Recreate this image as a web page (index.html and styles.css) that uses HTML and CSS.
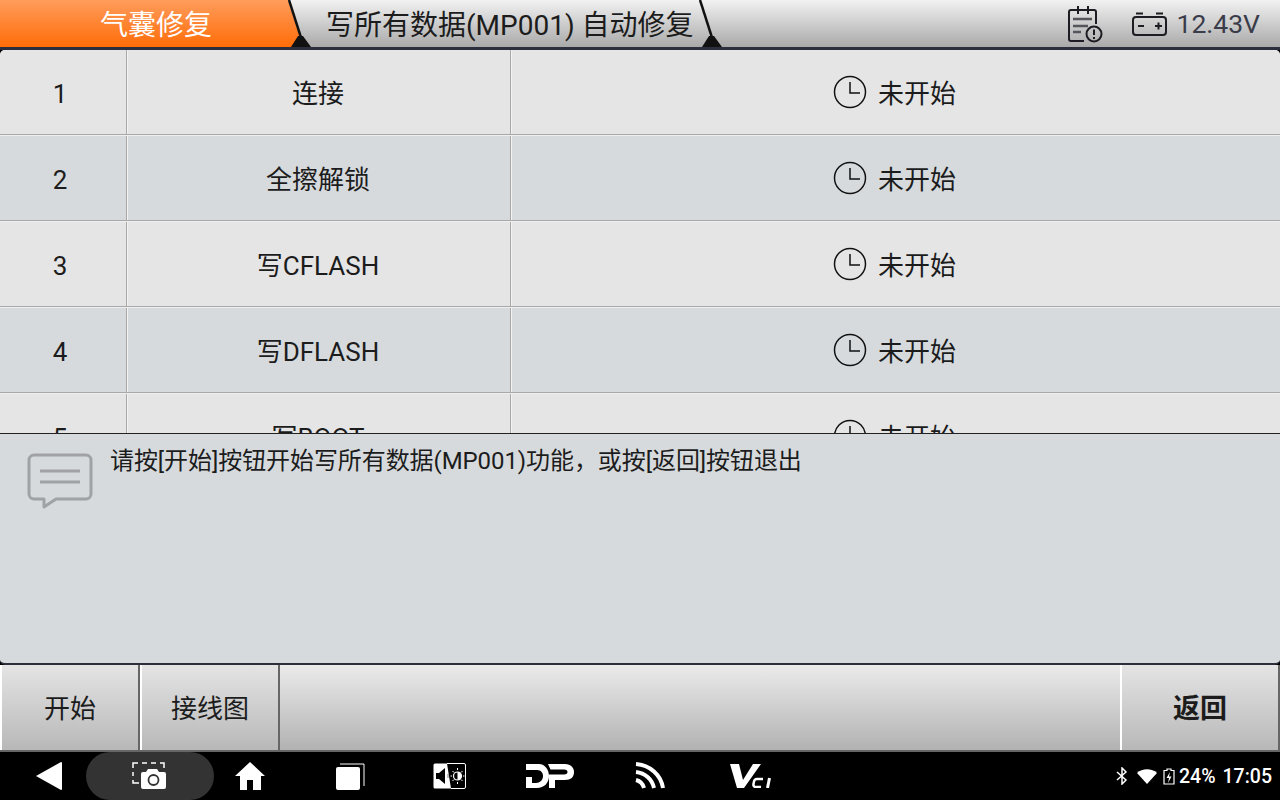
FILE: index.html
```html
<!DOCTYPE html>
<html lang="zh-CN">
  <head>
    <meta charset="UTF-8" />
    <title>气囊修复</title>
    <link rel="stylesheet" href="styles.css">
  </head>
  <body>
    <div class="topBar">
      <div class="tab activeTab">气囊修复</div>
      <div class="tab pathTab">写所有数据(MP001) 自动修复</div>
      <svg class="tabEdge edgeOne" width="26" height="47" viewBox="0 0 26 47">
        <path d="M1 0 L16 47" stroke="#111" stroke-width="2.500" fill="none" />
        <path d="M10 36 L15 36 L23 47 L3 47 Z" fill="#111" />
      </svg>
      <svg class="tabEdge edgeTwo" width="26" height="47" viewBox="0 0 26 47">
        <path d="M1 0 L16 47" stroke="#111" stroke-width="2.500" fill="none" />
        <path d="M10 36 L15 36 L23 47 L3 47 Z" fill="#111" />
      </svg>
      <div class="topStatus">
        <svg class="reportIcon" width="36" height="38" viewBox="0 0 36 38" fill="none" stroke="#1c1c22" stroke-width="2">
          <path d="M16 35 H3 a2 2 0 0 1 -2 -2 V6 a2 2 0 0 1 2 -2 H26 a2 2 0 0 1 2 2 V18" />
          <path d="M10 0 V8 M20 0 V8" />
          <path d="M5 13 H24 M5 20 H20 M5 26 H13" stroke="#55555c" stroke-width="2.500" />
          <circle cx="26" cy="28" r="7.500" />
          <path d="M26 23.500 V29 M26 31 V33" />
        </svg>
        <svg class="batteryIcon" width="36" height="24" viewBox="0 0 36 24" fill="none" stroke="#1c1c22" stroke-width="2">
          <rect x="1" y="5" width="33" height="18" rx="3" />
          <path d="M4 1.500 H11 M24 1.500 H31" />
          <path d="M6 14 H12 M23 14 H30 M26.500 10.500 V17.500" />
        </svg>
        <span class="voltage">12.43V</span>
      </div>
    </div>

    <div class="tableArea">
      <div class="row">
        <div class="cell numCell"><span class="rowNum">1</span></div>
        <div class="cell nameCell">连接</div>
        <div class="cell stateCell">
          <svg class="clock" width="34" height="34" viewBox="0 0 34 34" fill="none" stroke="#111" stroke-width="1.500"><circle cx="17" cy="17" r="15.500" /><path d="M17 7 V18 H27" /></svg>
          <span>未开始</span>
        </div>
      </div>
      <div class="row altRow">
        <div class="cell numCell"><span class="rowNum">2</span></div>
        <div class="cell nameCell">全擦解锁</div>
        <div class="cell stateCell">
          <svg class="clock" width="34" height="34" viewBox="0 0 34 34" fill="none" stroke="#111" stroke-width="1.500"><circle cx="17" cy="17" r="15.500" /><path d="M17 7 V18 H27" /></svg>
          <span>未开始</span>
        </div>
      </div>
      <div class="row">
        <div class="cell numCell"><span class="rowNum">3</span></div>
        <div class="cell nameCell">写CFLASH</div>
        <div class="cell stateCell">
          <svg class="clock" width="34" height="34" viewBox="0 0 34 34" fill="none" stroke="#111" stroke-width="1.500"><circle cx="17" cy="17" r="15.500" /><path d="M17 7 V18 H27" /></svg>
          <span>未开始</span>
        </div>
      </div>
      <div class="row altRow">
        <div class="cell numCell"><span class="rowNum">4</span></div>
        <div class="cell nameCell">写DFLASH</div>
        <div class="cell stateCell">
          <svg class="clock" width="34" height="34" viewBox="0 0 34 34" fill="none" stroke="#111" stroke-width="1.500"><circle cx="17" cy="17" r="15.500" /><path d="M17 7 V18 H27" /></svg>
          <span>未开始</span>
        </div>
      </div>
      <div class="row">
        <div class="cell numCell"><span class="rowNum">5</span></div>
        <div class="cell nameCell">写BOOT</div>
        <div class="cell stateCell">
          <svg class="clock" width="34" height="34" viewBox="0 0 34 34" fill="none" stroke="#111" stroke-width="1.500"><circle cx="17" cy="17" r="15.500" /><path d="M17 7 V18 H27" /></svg>
          <span>未开始</span>
        </div>
      </div>
    </div>

    <div class="messageArea">
      <svg class="messageIcon" width="68" height="58" viewBox="0 0 68 58" fill="none" stroke="#a0a2a5" stroke-width="3">
        <path d="M8 3 H60 a5 5 0 0 1 5 5 V42 a5 5 0 0 1 -5 5 H30 L18 55 V47 H8 a5 5 0 0 1 -5 -5 V8 a5 5 0 0 1 5 -5 Z" stroke-linejoin="round" />
        <path d="M14 19 H54 M14 30 H54" />
      </svg>
      <p class="messageText">请按[开始]按钮开始写所有数据(MP001)功能，或按[返回]按钮退出</p>
    </div>

    <div class="buttonBar">
      <button class="barButton">开始</button>
      <button class="barButton">接线图</button>
      <div class="barFill"></div>
      <button class="barButton backButton">返回</button>
    </div>

    <div class="navBar">
      <div class="navLeft">
        <svg class="navBack" width="28" height="30" viewBox="0 0 28 30"><path d="M26 1 a1 1 0 0 1 1 1 V28 a1 1 0 0 1 -1 1 L1 15 Z" fill="#fff" /></svg>
        <div class="shotPill">
          <svg width="36" height="28" viewBox="0 0 36 28" fill="none">
            <path d="M1 6 V1 H6 M10 1 H15 M19 1 H24 M28 1 H32 V6 M1 10 V14 M1 18 V21 H7" stroke="#fff" stroke-width="1.500" />
            <path d="M9 12 a2 2 0 0 1 2 -2 H14 L16 7 H25 L27 10 H32 a2 2 0 0 1 2 2 V25 a2 2 0 0 1 -2 2 H11 a2 2 0 0 1 -2 -2 Z" fill="#fff" />
            <circle cx="21.500" cy="18" r="5" fill="#fff" stroke="#333" stroke-width="1.800" />
          </svg>
        </div>
        <svg class="navHome" width="30" height="30" viewBox="0 0 30 30"><path d="M15 1 L30 15 H26 V29 H18 V19 H12 V29 H5 V15 H0 Z" fill="#fff" /></svg>
        <svg class="navRecent" width="30" height="28" viewBox="0 0 30 28" fill="none">
          <rect x="1" y="5" width="24" height="23" rx="2" fill="#fff" />
          <path d="M5 2 H29 V24" stroke="#fff" stroke-width="1" />
        </svg>
        <svg class="navSound" width="33" height="26" viewBox="0 0 33 26" fill="none">
          <path d="M2 0.500 H14 L18 25.500 H2 a1.500 1.500 0 0 1 -1.500 -1.500 V2 a1.500 1.500 0 0 1 1.500 -1.500 Z" fill="#fff" />
          <path d="M14 0.500 H31 a1.500 1.500 0 0 1 1.500 1.500 V24 a1.500 1.500 0 0 1 -1.500 1.500 H18" stroke="#fff" stroke-width="1" />
          <path d="M3 10 H6 L12 5 V21 L6 16 H3 Z" fill="#000" />
          <path d="M15 11 V15" stroke="#777" stroke-width="1" />
          <circle cx="24.500" cy="13" r="4" stroke="#fff" stroke-width="1.200" />
          <path d="M24.500 13 m0 -4 a4 4 0 0 1 0 8 Z" fill="#fff" />
          <path d="M24.500 5 V7 M24.500 19 V21 M17.500 13 H19 M30 13 H31.500 M19.500 8 L21 9.500 M28 16.500 L29.500 18 M29.500 8 L28 9.500 M21 16.500 L19.500 18" stroke="#fff" stroke-width="1" />
        </svg>
        <svg class="navDp" width="48" height="24" viewBox="0 0 48 24">
          <path d="M0 0 H13 C19 0 23 6 23 12 C23 19 18 24 11 24 H0 V13 H6 V19 H10 C14 19 17 16 17 12 C17 9 15 6 11 6 H0 Z" fill="#fff" />
          <path d="M22 0 H39 C45 0 48 4 48 8 C48 13 45 16 39 16 H29 V24 H23 V10.500 H38 C40.500 10.500 41.500 9.500 41.500 8 C41.500 6.500 40.500 5.500 38 5.500 H24.500 Z" fill="#fff" />
        </svg>
        <svg class="navFeed" width="30" height="28" viewBox="0 0 30 28" fill="none" stroke="#fff" stroke-width="4">
          <path d="M1 2 C15 3 26 13 28 26" />
          <path d="M1 10 C10 11 17 17 19 26" />
          <path d="M1 18 C5 19 8 22 9 26" />
        </svg>
        <svg class="navVci" width="42" height="24" viewBox="0 0 42 24">
          <path d="M0 0 H9 L13 16 L23 0 H31 L14 24 H7 Z" fill="#fff" />
          <path d="M33 15 H27 Q24.500 15 24 17.500 L23.500 20 Q23 23 26 23 H31" stroke="#fff" stroke-width="2.500" fill="none" />
          <path d="M39.500 14 L37.500 24" stroke="#fff" stroke-width="3" />
        </svg>
      </div>
      <div class="navRight">
        <svg width="12" height="18" viewBox="0 0 12 18" fill="none" stroke="#fff" stroke-width="1.500"><path d="M1 5 L10 13 L6 17 V1 L10 5 L1 13" /></svg>
        <svg class="statusWifi" width="20" height="15" viewBox="0 0 20 15"><path d="M0 4 C5 -1 15 -1 20 4 L10 15 Z" fill="#fff" /></svg>
        <svg class="statusBattery" width="12" height="17" viewBox="0 0 12 17" fill="none"><path d="M4 1 H8 V2.500 H11 V16 H1 V2.500 H4 Z" stroke="#fff" stroke-width="1.200" /><path d="M7 4 L3.500 10 H6 L5 15 L8.500 8.500 H6 Z" fill="#fff" /></svg>
        <span class="statusText">24%</span>
        <span class="statusText statusTime">17:05</span>
      </div>
    </div>
  </body>
</html>
```

FILE: styles.css
```css
* {
  box-sizing: border-box;
}

html,
body {
  height: 800px;
  overflow: hidden;
}

body {
  margin: 0;
  display: flex;
  flex-direction: column;
  background-color: #000;
  color: #1c1c1c;
  font-family: Roboto, 'Noto Sans CJK SC', sans-serif;
}

.topBar {
  height: 50px;
  display: flex;
  flex-shrink: 0;
  position: relative;
  background: linear-gradient(#f2f2f2, #a9a9a9 47px);
  border-bottom: 3px solid #2c2e3c;
}

.tab {
  display: flex;
  align-items: center;
  height: 45px;
  font-size: 28px;
  white-space: nowrap;
}

.activeTab {
  width: 310px;
  height: 47px;
  padding: 0 0 2px 100px;
  color: #fff;
  background: linear-gradient(#ff9c5c, #ff6d08);
  clip-path: polygon(0 0, 288px 0, 303px 47px, 0 47px);
}

.pathTab {
  margin-left: 16px;
}

.tabEdge {
  position: absolute;
  top: 0;
}

.edgeOne {
  left: 288px;
}

.edgeTwo {
  left: 699px;
}

.topStatus {
  margin-left: auto;
  display: flex;
  align-items: center;
  padding-right: 20px;
}

.reportIcon {
  margin-right: 28px;
  margin-top: 3px;
}

.batteryIcon {
  margin-right: 9px;
}

.voltage {
  font-size: 26.500px;
  color: #3a3c4a;
}

.tableArea {
  height: 384px;
  flex-shrink: 0;
  overflow: hidden;
  background-color: #e5e5e5;
  border-radius: 5px 5px 0 0;
  border-bottom: 1px solid #222;
}

.row {
  display: flex;
  height: 86px;
  background-color: #e5e5e5;
  border-top: 1px solid #efefef;
  border-bottom: 1px solid #a8a8a8;
  font-size: 26px;
}

.row:first-child {
  height: 85px;
  border-top: none;
}

.altRow {
  background-color: #d7dadd;
}

.cell {
  display: flex;
  align-items: center;
  justify-content: center;
  padding-bottom: 2px;
}

.numCell {
  width: 127px;
  padding-right: 6px;
  border-right: 1px solid #a8a8a8;
}

.rowNum {
  position: relative;
  top: 3px;
}

.nameCell {
  width: 384px;
  padding-right: 2px;
  border-left: 1px solid #f2f2f2;
  border-right: 1px solid #a8a8a8;
}

.stateCell {
  flex: 1;
  gap: 11px;
  padding-right: 3px;
  border-left: 1px solid #f2f2f2;
}

.clock {
  margin-top: 1px;
}

.messageArea {
  height: 231px;
  flex-shrink: 0;
  display: flex;
  align-items: flex-start;
  padding: 10px 0 0 26px;
  background-color: #d7dadd;
  border-bottom: 2px solid #2c2e3c;
  border-radius: 0 0 5px 5px;
}

.messageIcon {
  margin-top: 8px;
}

.messageText {
  margin: 0 0 0 16px;
  font-size: 24px;
  line-height: 34px;
  letter-spacing: -0.080px;
  color: #1c1c1c;
}

.buttonBar {
  height: 87px;
  flex-shrink: 0;
  display: flex;
  background: linear-gradient(#ebebeb, #b2b2b2);
  border-bottom: 2px solid #666;
}

.barButton {
  width: 140px;
  padding: 0 0 2px;
  border: none;
  border-left: 2px solid #fff;
  border-right: 2px solid #666;
  font-family: inherit;
  font-size: 26px;
  color: #1c1c1c;
  background: linear-gradient(#e4e4e4, #b8b8b8);
}

.barFill {
  flex: 1;
}

.backButton {
  width: 160px;
  font-weight: 700;
  font-size: 27px;
}

.navBar {
  height: 48px;
  flex-shrink: 0;
  display: flex;
  justify-content: space-between;
  background-color: #000;
}

.navLeft {
  display: flex;
  align-items: center;
}

.navBack {
  margin-left: 35px;
}

.shotPill {
  width: 128px;
  height: 48px;
  margin-left: 23px;
  display: flex;
  align-items: center;
  justify-content: center;
  border-radius: 24px;
  background-color: #333;
}

.navHome {
  margin-left: 21px;
}

.navRecent {
  margin-left: 70px;
}

.navSound {
  margin-left: 68px;
}

.navDp {
  margin-left: 60px;
}

.navFeed {
  margin-left: 61px;
}

.navVci {
  margin-left: 65px;
}

.navRight {
  display: flex;
  align-items: center;
  padding-right: 8px;
  color: #fff;
}

.statusWifi {
  margin-left: 9px;
}

.statusBattery {
  margin-left: 6px;
}

.statusText {
  margin-left: 4px;
  font-size: 19.500px;
  font-weight: 500;
}

.statusTime {
  margin-left: 7px;
}
```
